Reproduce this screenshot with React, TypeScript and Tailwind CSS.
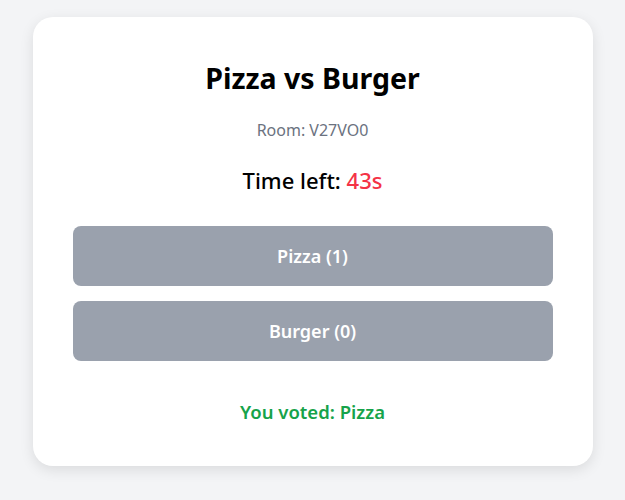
import React from "react";

export default function App() {
  return (
    <div className="min-h-[500px] bg-[#f3f4f6] pt-[17px] flex justify-center" style={{ fontFamily: '"Noto Sans", sans-serif' }}>
      <div className="w-[560px] h-[449px] bg-white rounded-[20px] shadow-[0_4px_14px_rgba(0,0,0,0.1)] px-10 pt-[39px] flex flex-col items-center">
        <h1 className="text-[28.5px] leading-[44px] font-bold text-black">Pizza vs Burger</h1>
        <p className="mt-[19px] text-[16px] leading-[22px] text-[#6b7280]">Room: V27VO0</p>
        <p className="mt-[24px] text-[22px] leading-[30px] font-medium text-black">
          Time left: <span className="text-[#f43346]">43s</span>
        </p>
        <div className="mt-[31px] w-full flex flex-col gap-[15px]">
          <button className="h-[60px] w-full rounded-lg bg-[#9aa1ad] text-white text-[18px] font-semibold">Pizza (1)</button>
          <button className="h-[60px] w-full rounded-lg bg-[#9aa1ad] text-white text-[18px] font-semibold">Burger (0)</button>
        </div>
        <p className="mt-[38px] text-[18.5px] leading-[26px] font-semibold text-[#16a34a]">You voted: Pizza</p>
      </div>
    </div>
  );
}
